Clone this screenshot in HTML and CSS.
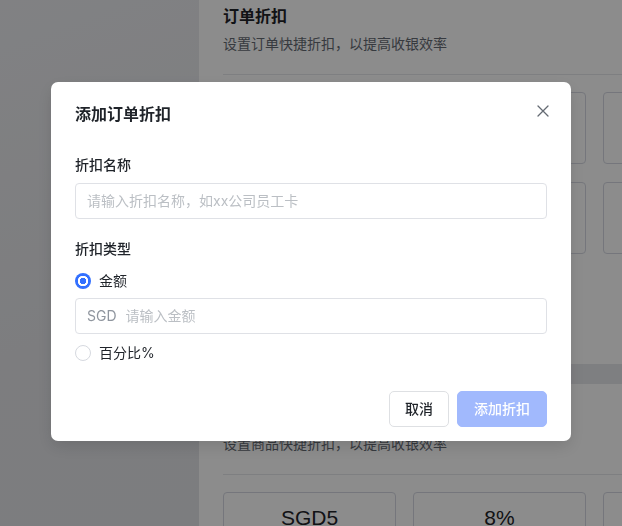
FILE: index.html
```html
<!DOCTYPE html>
<html lang="zh-CN">
<head>
<meta charset="utf-8">
<title>添加订单折扣</title>
<link rel="stylesheet" href="styles.css">
</head>
<body>
<div class="app">
  <aside class="sidebar"></aside>
  <main class="main">
    <section class="card">
      <h2 class="card-title">订单折扣</h2>
      <p class="card-sub">设置订单快捷折扣，以提高收银效率</p>
      <div class="divider"></div>
      <div class="tiles">
        <div class="tile"></div>
        <div class="tile"></div>
        <div class="tile"></div>
        <div class="tile"></div>
        <div class="tile"></div>
        <div class="tile"></div>
      </div>
    </section>
    <section class="card">
      <h2 class="card-title">商品折扣</h2>
      <p class="card-sub">设置商品快捷折扣，以提高收银效率</p>
      <div class="divider"></div>
      <div class="tiles">
        <div class="tile">SGD5</div>
        <div class="tile">8%</div>
        <div class="tile"></div>
      </div>
    </section>
  </main>
</div>

<div class="overlay">
  <div class="dialog">
    <div class="dialog-header">
      <h3 class="dialog-title">添加订单折扣</h3>
      <span class="close">
        <svg width="12" height="12" viewBox="0 0 12 12"><path d="M1 1L11 11M11 1L1 11" stroke="#646a73" stroke-width="1.3" fill="none" stroke-linecap="round"/></svg>
      </span>
    </div>

    <div class="form-item first">
      <div class="label">折扣名称</div>
      <div class="input"><span class="placeholder">请输入折扣名称，如xx公司员工卡</span></div>
    </div>

    <div class="form-item second">
      <div class="label">折扣类型</div>
      <div class="radio-row">
        <span class="radio checked"></span><span class="radio-text">金额</span>
      </div>
      <div class="input amount"><span class="prefix">SGD</span><span class="placeholder">请输入金额</span></div>
      <div class="radio-row last">
        <span class="radio"></span><span class="radio-text">百分比%</span>
      </div>
    </div>

    <div class="footer">
      <button class="btn btn-cancel">取消</button>
      <button class="btn btn-primary">添加折扣</button>
    </div>
  </div>
</div>
</body>
</html>
```

FILE: styles.css
```css
* { box-sizing: border-box; }

html, body {
  margin: 0;
  padding: 0;
  width: 622px;
  height: 526px;
  overflow: hidden;
}

body {
  font-family: "Inter", "Noto Sans CJK SC", sans-serif;
  background: #e6e7eb;
  color: #1f2329;
}

.app {
  display: flex;
  height: 526px;
}

.sidebar {
  width: 199px;
  flex: none;
  background: linear-gradient(160deg, #ebecef 0%, #e3e4e8 60%, #e2e3e7 100%);
}

.main {
  flex: 1;
  min-width: 0;
  overflow: hidden;
  display: flex;
  flex-direction: column;
  gap: 20px;
  margin-top: -16px;
}

.card {
  background: #ffffff;
  width: 640px;
  min-height: 380px;
  padding: 20px 24px;
  flex: none;
}

.card-title {
  margin: 0;
  font-size: 16px;
  line-height: 24px;
  font-weight: 600;
  color: #1f2329;
}

.card-sub {
  margin: 5px 0 0;
  font-size: 14px;
  line-height: 22px;
  color: #646a73;
}

.divider {
  height: 1px;
  background: #e6e8ec;
  margin-top: 19px;
}

.tiles {
  margin-top: 17px;
  display: grid;
  grid-template-columns: repeat(3, 173px);
  gap: 18px 17px;
}

.tile {
  height: 72px;
  border: 1px solid #d6d8e2;
  border-radius: 4px;
  padding-top: 13px;
  text-align: center;
  font-family: "Liberation Sans", "Noto Sans CJK SC", sans-serif;
  font-size: 21px;
  line-height: 24px;
  color: #1f2329;
}

/* overlay + dialog */
.overlay {
  position: fixed;
  inset: 0;
  background: rgba(0, 0, 0, 0.45);
}

.dialog {
  width: 520px;
  margin: 82px auto 0;
  background: #ffffff;
  border-radius: 7px;
  padding: 20px 24px 14px;
  box-shadow: 0 6px 16px rgba(0, 0, 0, 0.12);
}

.dialog-header {
  display: flex;
  justify-content: space-between;
  align-items: flex-start;
}

.dialog-title {
  margin: 0;
  font-size: 16px;
  line-height: 24px;
  font-weight: 600;
  color: #1f2329;
}

.close {
  display: block;
  width: 12px;
  height: 12px;
  margin-top: 3px;
  margin-right: -2px;
}

.close svg { display: block; }

.form-item.first { margin-top: 28px; }
.form-item.second { margin-top: 19px; }

.label {
  font-size: 14px;
  line-height: 22px;
  font-weight: 500;
  color: #1f2329;
  margin-bottom: 7px;
}

.second .label { margin-bottom: 10px; }

.input {
  height: 36px;
  border: 1px solid #dfe1e6;
  border-radius: 4px;
  padding: 0 11px;
  display: flex;
  align-items: center;
  font-size: 14px;
  line-height: 22px;
}

.placeholder { color: #bbbfc4; }

.input.amount { margin-top: 6px; }

.prefix {
  color: #8f959e;
  margin-right: 9px;
}

.radio-row {
  display: flex;
  align-items: center;
  height: 22px;
  gap: 8px;
  font-size: 14px;
  line-height: 22px;
  color: #1f2329;
}

.radio-row.last { margin-top: 8px; }

.radio {
  width: 16px;
  height: 16px;
  border-radius: 50%;
  border: 1px solid #d6d9df;
  background: #ffffff;
  flex: none;
}

.radio.checked {
  border: none;
  background: radial-gradient(circle, #3370ff 0 3px, #ffffff 3.5px 5px, #3370ff 5.5px);
}

.footer {
  margin-top: 27px;
  display: flex;
  justify-content: flex-end;
  gap: 8px;
}

.btn {
  height: 36px;
  padding: 0 15px;
  border-radius: 5px;
  font-family: "Inter", "Noto Sans CJK SC", sans-serif;
  font-size: 14px;
  line-height: 22px;
  font-weight: 500;
  cursor: pointer;
}

.btn-cancel {
  background: #ffffff;
  border: 1px solid #dee0e3;
  color: #1f2329;
}

.btn-primary {
  background: #a1b9fd;
  border: 1px solid #a1b9fd;
  color: #ffffff;
  padding: 0 16px;
}
```
